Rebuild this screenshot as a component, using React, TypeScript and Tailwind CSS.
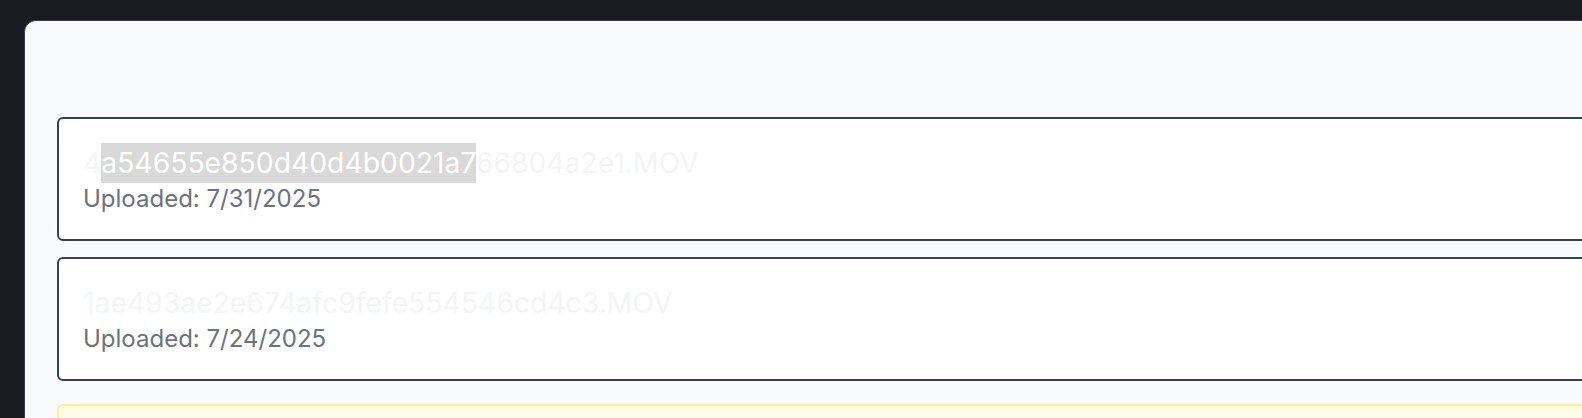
export default function App() {
  const files = [
    { name: '4a54655e850d40d4b0021a766804a2e1.MOV', date: '7/31/2025', sel: [1, 23] },
    { name: '1ae493ae2e674afc9fefe554546cd4c3.MOV', date: '7/24/2025', sel: null },
  ]

  return (
    <div
      className="h-[418px] w-full overflow-hidden bg-[#1b1c21] pl-6 pt-5"
      style={{ fontFamily: 'Inter, "Noto Sans", sans-serif' }}
    >
      <div className="w-[1700px] rounded-xl border border-[#3a3f4b] bg-[#f9fafb] px-8 pt-8 pb-10">
        {/* Header area (empty) */}
        <div className="h-16"></div>

        <div className="flex flex-col gap-4">
          {files.map((f) => (
            <div key={f.name} className="rounded-md border-2 border-[#374151] bg-white p-6">
              <div className="text-[28.3px] leading-[40px] text-[#f4f5f7]">
                {f.sel ? (
                  <>
                    {f.name.slice(0, f.sel[0])}
                    <span className="bg-[#d9d9d9] py-[3px] text-white">{f.name.slice(f.sel[0], f.sel[1])}</span>
                    {f.name.slice(f.sel[1])}
                  </>
                ) : (
                  f.name
                )}
              </div>
              <div className="text-[24px] leading-[32px] text-[#6b7280]">Uploaded: {f.date}</div>
            </div>
          ))}
        </div>

        <div className="mt-[23px] h-24 rounded-md border-2 border-[#fef08a] bg-[#fefce8]"></div>
      </div>
    </div>
  )
}
